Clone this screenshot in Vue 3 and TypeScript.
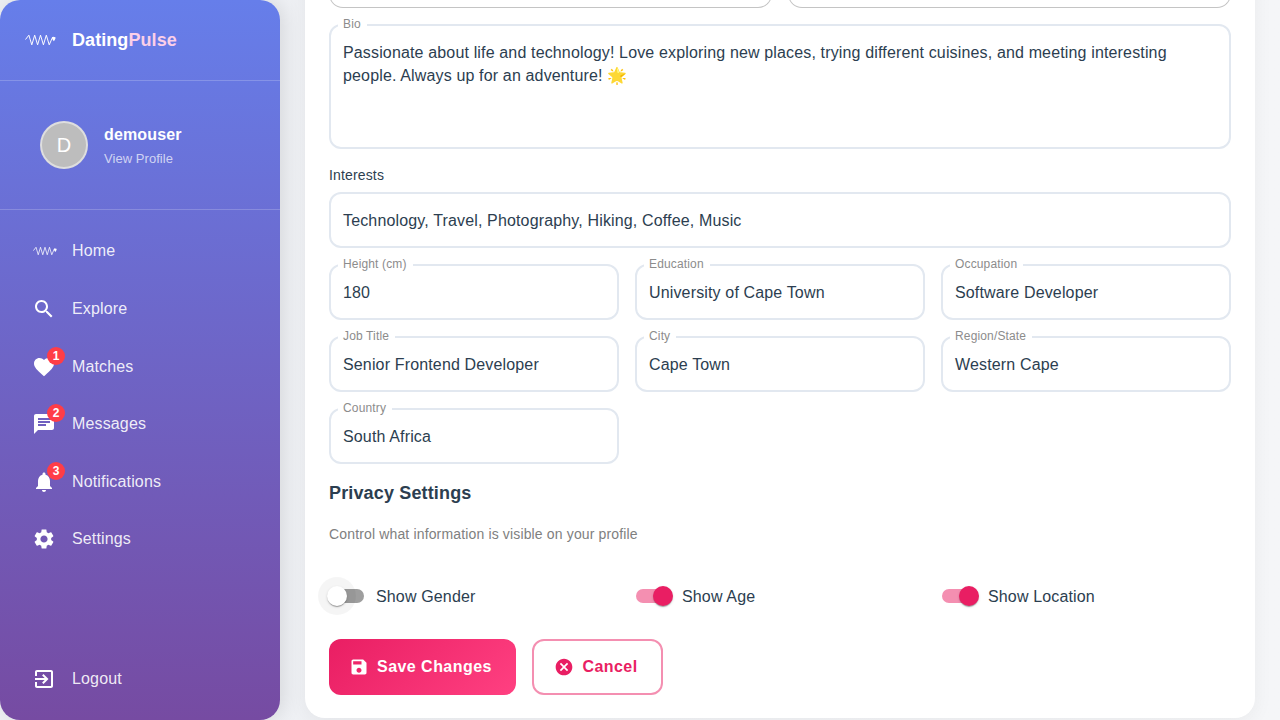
<script setup lang="ts">
const topItems = [
  { label: 'Home', icon: 'pulse', badge: 0 },
  { label: 'Explore', icon: 'search', badge: 0 },
  { label: 'Matches', icon: 'heart', badge: 1 },
  { label: 'Messages', icon: 'chat', badge: 2 },
  { label: 'Notifications', icon: 'bell', badge: 3 },
  { label: 'Settings', icon: 'gear', badge: 0 },
]
const paths: Record<string, string> = {
  search: 'M15.5 14h-.79l-.28-.27C15.41 12.59 16 11.11 16 9.5 16 5.91 13.09 3 9.5 3S3 5.91 3 9.5 5.91 16 9.5 16c1.61 0 3.09-.59 4.23-1.57l.27.28v.79l5 4.99L20.49 19l-4.99-5zm-6 0C7.01 14 5 11.99 5 9.5S7.01 5 9.5 5 14 7.01 14 9.5 11.99 14 9.5 14z',
  heart: 'M12 21.35l-1.45-1.32C5.4 15.36 2 12.28 2 8.5 2 5.42 4.42 3 7.5 3c1.74 0 3.41.81 4.5 2.09C13.09 3.81 14.76 3 16.5 3 19.58 3 22 5.42 22 8.5c0 3.78-3.4 6.86-8.55 11.54L12 21.35z',
  chat: 'M20 2H4c-1.1 0-1.99.9-1.99 2L2 22l4-4h14c1.1 0 2-.9 2-2V4c0-1.1-.9-2-2-2zM6 9h12v2H6V9zm8 5H6v-2h8v2zm4-6H6V6h12v2z',
  bell: 'M12 22c1.1 0 2-.9 2-2h-4c0 1.1.89 2 2 2zm6-6v-5c0-3.07-1.64-5.64-4.5-6.32V4c0-.83-.67-1.5-1.5-1.5s-1.5.67-1.5 1.5v.68C7.63 5.36 6 7.92 6 11v5l-2 2v1h16v-1l-2-2z',
  gear: 'M19.14 12.94c.04-.3.06-.61.06-.94 0-.32-.02-.64-.07-.94l2.03-1.58c.18-.14.23-.41.12-.61l-1.92-3.32c-.12-.22-.37-.29-.59-.22l-2.39.96c-.5-.38-1.03-.7-1.62-.94l-.36-2.54c-.04-.24-.24-.41-.48-.41h-3.84c-.24 0-.43.17-.47.41l-.36 2.54c-.59.24-1.13.57-1.62.94l-2.39-.96c-.22-.08-.47 0-.59.22L2.74 8.87c-.12.21-.08.47.12.61l2.03 1.58c-.05.3-.09.63-.09.94s.02.64.07.94l-2.03 1.58c-.18.14-.23.41-.12.61l1.92 3.32c.12.22.37.29.59.22l2.39-.96c.5.38 1.03.7 1.62.94l.36 2.54c.05.24.24.41.48.41h3.84c.24 0 .44-.17.47-.41l.36-2.54c.59-.24 1.13-.56 1.62-.94l2.39.96c.22.08.47 0 .59-.22l1.92-3.32c.12-.22.07-.47-.12-.61l-2.01-1.58zM12 15.6c-1.98 0-3.6-1.62-3.6-3.6s1.62-3.6 3.6-3.6 3.6 1.62 3.6 3.6-1.62 3.6-3.6 3.6z',
}
const rows = [
  { label: 'Height (cm)', value: '180' },
  { label: 'Education', value: 'University of Cape Town' },
  { label: 'Occupation', value: 'Software Developer' },
  { label: 'Job Title', value: 'Senior Frontend Developer' },
  { label: 'City', value: 'Cape Town' },
  { label: 'Region/State', value: 'Western Cape' },
  { label: 'Country', value: 'South Africa' },
]
const toggles = [
  { label: 'Show Gender', on: false },
  { label: 'Show Age', on: true },
  { label: 'Show Location', on: true },
]
</script>

<template>
  <div class="page">
    <aside class="sidebar">
      <div class="brand">
        <svg class="pulse logo" viewBox="0 0 32 12" fill="none">
          <polyline points="0.5,5.5 4,1 7,11 10,1 13,11 16,1 19,11 22,1 25,11 28.5,3" stroke="#fff" stroke-width="1" />
          <path d="M27.9 3.4c.7-.8 1.5-.8 2-.3.5-.5 1.4-.4 1.6.4.2 1-.7 2.3-1.7 3.8-1-1.4-2.2-2.8-1.9-3.9z" fill="#fff" />
        </svg>
        <span class="brand-name">Dating<span class="brand-accent">Pulse</span></span>
      </div>
      <div class="profile">
        <div class="avatar">D</div>
        <div class="who">
          <div class="username">demouser</div>
          <div class="view">View Profile</div>
        </div>
      </div>
      <nav class="nav">
        <a v-for="item in topItems" :key="item.label" class="nav-item">
          <span class="nav-icon">
            <svg v-if="item.icon === 'pulse'" class="pulse small" viewBox="0 0 32 12" fill="none">
              <polyline points="0.5,5.5 4,1 7,11 10,1 13,11 16,1 19,11 22,1 25,11 28.5,3" stroke="#fff" stroke-opacity="0.85" stroke-width="1.2" />
              <path d="M27.9 3.4c.7-.8 1.5-.8 2-.3.5-.5 1.4-.4 1.6.4.2 1-.7 2.3-1.7 3.8-1-1.4-2.2-2.8-1.9-3.9z" fill="#fff" />
            </svg>
            <svg v-else class="glyph" viewBox="0 0 24 24"><path :d="paths[item.icon]" /></svg>
            <span v-if="item.badge" class="badge">{{ item.badge }}</span>
          </span>
          <span>{{ item.label }}</span>
        </a>
      </nav>
      <a class="nav-item logout">
        <span class="nav-icon">
          <svg class="glyph" viewBox="0 0 24 24"><path d="M10.09 15.59L11.5 17l5-5-5-5-1.41 1.41L12.67 11H3v2h9.67l-2.58 2.59zM19 3H5c-1.11 0-2 .9-2 2v4h2V5h14v14H5v-4H3v4c0 1.1.89 2 2 2h14c1.1 0 2-.9 2-2V5c0-1.1-.9-2-2-2z" /></svg>
        </span>
        <span>Logout</span>
      </a>
    </aside>

    <main class="main">
      <section class="card">
        <div class="two">
          <div class="stub"></div>
          <div class="stub"></div>
        </div>
        <div class="field bio">
          <span class="legend">Bio</span>
          <p class="bio-text">Passionate about life and technology! Love exploring new places, trying different cuisines, and meeting interesting people. Always up for an adventure! 🌟</p>
        </div>
        <div class="plain-label">Interests</div>
        <div class="field"><span class="value">Technology, Travel, Photography, Hiking, Coffee, Music</span></div>
        <div class="grid">
          <div v-for="r in rows" :key="r.label" class="field">
            <span class="legend">{{ r.label }}</span>
            <span class="value">{{ r.value }}</span>
          </div>
        </div>
        <h3 class="privacy">Privacy Settings</h3>
        <p class="desc">Control what information is visible on your profile</p>
        <div class="toggles">
          <div v-for="t in toggles" :key="t.label" class="toggle" :class="{ on: t.on }">
            <span class="switch">
              <span class="track"></span>
              <span class="halo" v-if="!t.on"></span>
              <span class="thumb"></span>
            </span>
            <span class="toggle-label">{{ t.label }}</span>
          </div>
        </div>
        <div class="actions">
          <button class="btn save">
            <svg class="btn-icon" viewBox="0 0 24 24"><path d="M17 3H5c-1.11 0-2 .9-2 2v14c0 1.1.89 2 2 2h14c1.1 0 2-.9 2-2V7l-4-4zm-5 16c-1.66 0-3-1.34-3-3s1.34-3 3-3 3 1.34 3 3-1.34 3-3 3zm3-10H5V5h10v4z" /></svg>
            Save Changes
          </button>
          <button class="btn cancel">
            <svg class="btn-icon" viewBox="0 0 24 24"><path d="M12 2C6.47 2 2 6.47 2 12s4.47 10 10 10 10-4.47 10-10S17.53 2 12 2zm5 13.59L15.59 17 12 13.41 8.41 17 7 15.59 10.59 12 7 8.41 8.41 7 12 10.59 15.59 7 17 8.41 13.41 12 17 15.59z" /></svg>
            Cancel
          </button>
        </div>
      </section>
    </main>
  </div>
</template>

<style>
html, body { margin: 0; height: 100%; overflow: hidden; background: #f5f6f8; }
</style>

<style scoped>
.page {
  display: flex;
  height: 720px;
  overflow: hidden;
  font-family: "Liberation Sans", Arial, sans-serif;
  letter-spacing: 0.15px;
  color: #2c3e50;
  background: linear-gradient(90deg, #edeff3, #f5f6f8);
}
.sidebar {
  width: 280px;
  flex: none;
  height: 720px;
  box-sizing: border-box;
  display: flex;
  flex-direction: column;
  border-radius: 20px;
  background: linear-gradient(180deg, #667eea 0%, #764ba2 100%);
  box-shadow: 4px 0 20px rgba(0, 0, 0, 0.1);
  color: #fff;
}
.brand {
  height: 81px;
  box-sizing: border-box;
  display: flex;
  align-items: center;
  padding-left: 25px;
  gap: 16px;
  border-bottom: 1px solid rgba(255, 255, 255, 0.2);
  flex: none;
}
.pulse { display: block; flex: none; }
.logo { width: 31px; height: 12px; }
.small { width: 24px; height: 10px; margin-left: 1px; }
.brand-name { font-size: 18px; font-weight: 700; color: #fff; letter-spacing: 0.07px; }
.brand-accent { color: #fbcfe8; }
.profile {
  height: 129px;
  box-sizing: border-box;
  flex: none;
  display: flex;
  align-items: center;
  padding-left: 40px;
  gap: 16px;
  border-bottom: 1px solid rgba(255, 255, 255, 0.2);
}
.avatar {
  width: 48px;
  height: 48px;
  box-sizing: border-box;
  border-radius: 50%;
  border: 2px solid rgba(255, 255, 255, 0.5);
  background: #bdbdbd;
  color: #fff;
  font-size: 20px;
  letter-spacing: 0;
  display: flex;
  align-items: center;
  justify-content: center;
}
.who { padding-top: 2px; }
.username { font-size: 16px; font-weight: 700; line-height: 20px; }
.view { font-size: 13px; line-height: 16px; margin-top: 6px; letter-spacing: 0.05px; color: rgba(255, 255, 255, 0.7); }
.nav { padding-top: 12.6px; flex: 1; display: flex; flex-direction: column; }
.nav-item {
  height: 57.6px;
  flex: none;
  display: flex;
  align-items: center;
  padding-left: 32px;
  font-size: 16px;
  color: rgba(255, 255, 255, 0.9);
}
.nav-icon {
  position: relative;
  width: 24px;
  height: 24px;
  margin-right: 16px;
  display: flex;
  align-items: center;
  flex: none;
}
.glyph { width: 24px; height: 24px; fill: #fff; display: block; }
.badge {
  position: absolute;
  top: -8px;
  left: 15px;
  min-width: 18px;
  height: 18px;
  border-radius: 9px;
  background: #ff3d47;
  color: #fff;
  font-size: 12px;
  font-weight: 700;
  letter-spacing: 0;
  line-height: 18px;
  text-align: center;
}
.logout { margin-bottom: 12px; }
.main { flex: 1; min-width: 0; padding: 0 25px; }
.card {
  margin-top: -24px;
  height: 742px;
  padding: 0 24px;
  background: #fff;
  border-radius: 0 0 20px 20px;
  box-shadow: 0 4px 20px rgba(0, 0, 0, 0.05);
  box-sizing: border-box;
}
.two { display: flex; gap: 16px; height: 32px; margin-bottom: 16px; }
.stub {
  flex: 1;
  border: 1px solid #c4c4c4;
  border-top: none;
  border-radius: 0 0 14px 14px;
}
.field {
  position: relative;
  box-sizing: border-box;
  height: 56px;
  border: 2px solid #e2e8f0;
  border-radius: 12px;
  padding: 2px 12px 0;
  display: flex;
  align-items: center;
  font-size: 16px;
}
.legend {
  position: absolute;
  top: -10px;
  left: 7px;
  padding: 0 6px 0 5px;
  background: #fff;
  font-size: 12px;
  line-height: 16px;
  color: #8c8c8c;
}
.bio { height: 125px; align-items: flex-start; padding-top: 0; }
.bio-text { margin: 15px 0 0; line-height: 23px; }
.plain-label { font-size: 14px; line-height: 18px; margin-top: 17px; margin-bottom: 8px; }
.grid {
  display: grid;
  grid-template-columns: repeat(3, 1fr);
  gap: 16px;
  margin-top: 16px;
}
.privacy { margin: 17px 0 0; font-size: 18px; line-height: 24px; font-weight: 700; }
.desc { margin: 20px 0 0; font-size: 14px; line-height: 18px; color: #808080; }
.toggles {
  display: grid;
  grid-template-columns: repeat(3, 1fr);
  gap: 16px;
  margin-top: 34px;
}
.toggle { display: flex; align-items: center; height: 38px; margin-left: -11px; font-size: 16px; }
.toggle-label { padding-top: 2px; }
.switch { position: relative; width: 58px; height: 38px; flex: none; }
.track {
  position: absolute;
  left: 12px;
  top: 12px;
  width: 34px;
  height: 14px;
  border-radius: 7px;
  background: #9e9e9e;
}
.halo {
  position: absolute;
  left: 0;
  top: 0;
  width: 38px;
  height: 38px;
  border-radius: 50%;
  background: rgba(0, 0, 0, 0.04);
}
.thumb {
  position: absolute;
  left: 9px;
  top: 9px;
  width: 20px;
  height: 20px;
  border-radius: 50%;
  background: #fff;
  box-shadow: 0 2px 1px -1px rgba(0,0,0,.2), 0 1px 1px 0 rgba(0,0,0,.14), 0 1px 3px 0 rgba(0,0,0,.12);
}
.on .track { background: #f48fb1; }
.on .thumb { left: 29px; background: #e91e63; }
.actions { display: flex; gap: 16px; margin-top: 24px; }
.btn {
  height: 56px;
  box-sizing: border-box;
  border-radius: 12px;
  display: flex;
  align-items: center;
  gap: 8px;
  padding: 0 24px 0 20px;
  font-family: inherit;
  font-size: 16px;
  font-weight: 700;
  letter-spacing: 0.46px;
}
.btn-icon { width: 20px; height: 20px; fill: currentColor; flex: none; }
.save {
  border: none;
  color: #fff;
  background: linear-gradient(135deg, #e91e63, #ff4081);
  padding-right: 24.5px;
}
.cancel { border: 2px solid #f48fb1; background: #fff; color: #e91e63; padding-right: 23.3px; }
</style>
